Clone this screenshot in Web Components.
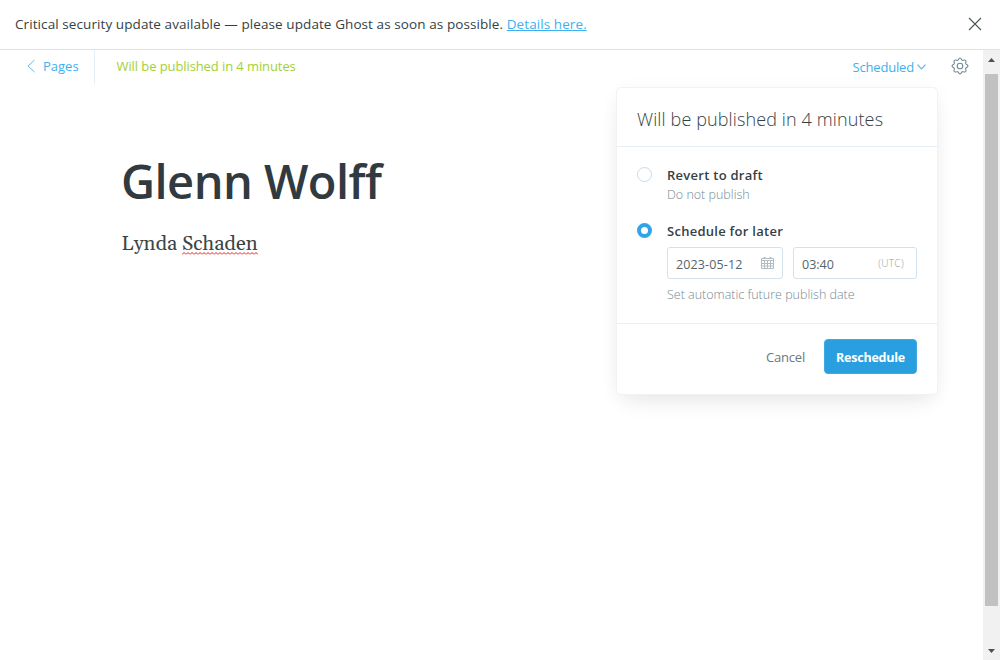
<!DOCTYPE html>
<html lang="en">
<head>
<meta charset="utf-8">
<title>Ghost editor</title>
<style>
html,body{margin:0;height:100%;overflow:hidden;background:#fff}
body{font-family:"Open Sans","Noto Sans",sans-serif;color:#343f44;font-size:13px}
</style>
</head>
<body>
<ghost-app></ghost-app>
<script>
function define(name, html) {
  const t = document.createElement('template');
  t.innerHTML = html;
  customElements.define(name, class extends HTMLElement {
    constructor() {
      super();
      this.attachShadow({mode: 'open'}).append(t.content.cloneNode(true));
    }
  });
}

define('ghost-alert', `
<style>
:host{display:flex;box-sizing:border-box;height:50px;flex:none;border-bottom:1px solid #dfe1e3;padding:0 18px 1px 15px;align-items:center;justify-content:space-between;font-size:13.500px;line-height:20px;color:#343f44}
p{margin:0;white-space:nowrap;letter-spacing:.085px}
svg{display:block}
</style>
<p><slot></slot></p>
<svg width="14" height="14" viewBox="0 0 14 14" fill="none" stroke="#4a5459" stroke-width="1.1"><path d="M1 1l12 12M13 1L1 13"/></svg>`);

define('editor-toolbar', `
<style>
:host{display:flex;height:33px;align-items:center;font-size:13px;white-space:nowrap}
.back{display:flex;align-items:center;box-sizing:border-box;width:95px;height:34px;margin-bottom:-1px;padding:0 0 2px 27px;border-right:1px solid #e5eff5;color:#3eb0ef}
.back svg{margin-right:8px}
.status{margin-left:21.500px;color:#a4d037;padding-bottom:2px;letter-spacing:-.09px}
.sch{margin-left:auto;color:#3eb0ef;display:flex;align-items:center;letter-spacing:-.17px}
.sch svg{margin-left:3px;margin-top:1px}
.gear{margin:0 14px 2px 25px}
</style>
<div class="back"><svg width="8" height="14" viewBox="0 0 8 14" fill="none" stroke="#5fbcea" stroke-width="1"><path d="M7.500 1L1 7l6.500 6"/></svg><span>Pages</span></div>
<span class="status">Will be published in 4 minutes</span>
<div class="sch"><span>Scheduled</span><svg width="9" height="6" viewBox="0 0 9 6" fill="none" stroke="#62b5df" stroke-width="1.2"><path d="M.5.6l4 4.200 4-4.200"/></svg></div>
<svg class="gear" width="18" height="18" viewBox="0 0 18 18" fill="none" stroke="#738a94" stroke-width="1.1" stroke-linejoin="round"><circle cx="9" cy="9" r="2.800"/><path d="M7.300 2.800Q9 -.8 10.700 2.800Q11.400 3.600 12.200 3.300Q15.900 2.100 14.700 5.800Q14.400 6.600 15.200 7.300Q18.800 9 15.200 10.700Q14.400 11.400 14.700 12.200Q15.900 15.900 12.200 14.700Q11.400 14.400 10.700 15.200Q9 18.800 7.300 15.200Q6.600 14.400 5.800 14.700Q2.100 15.900 3.300 12.200Q3.600 11.400 2.800 10.700Q-.8 9 2.800 7.300Q3.600 6.600 3.300 5.800Q2.100 2.100 5.800 3.300Q6.600 3.600 7.300 2.800z"/></svg>`);

define('post-editor', `
<style>
:host{display:block;padding:69px 0 0 121px}
h1{margin:0;font-size:47px;line-height:58px;font-weight:600;color:#303a40;white-space:nowrap;letter-spacing:-.55px}
p{margin:18px 0 0;font:20.150px/32px Gelasio,Georgia,"Liberation Serif",serif;color:#3a4549;white-space:nowrap;padding-left:.5px}
u{text-decoration:none;background:url("data:image/svg+xml,%3Csvg xmlns='http://www.w3.org/2000/svg' width='4' height='3'%3E%3Cpath d='M0 2.500L2 .5L4 2.500' fill='none' stroke='%23f01818'/%3E%3C/svg%3E") 0 calc(100% - 2px)/4px 3px repeat-x}
</style>
<h1>Glenn Wolff</h1>
<p>Lynda <u>Schaden</u></p>`);

define('radio-option', `
<style>
:host{display:grid;grid-template-columns:15px 1fr;column-gap:15px;line-height:20px}
i{box-sizing:border-box;width:15px;height:15px;margin-top:2px;border-radius:50%;border:1px solid #c5dceb}
:host([checked]) i{border:4px solid #2fa4e7}
b{font-size:13px;font-weight:600;color:#343f44;white-space:nowrap;letter-spacing:.27px}
</style>
<i></i><div><b><slot name="label"></slot></b><slot></slot></div>`);

define('text-field', `
<style>
:host{display:flex;box-sizing:border-box;height:32px;border:1px solid #d3e2ec;border-radius:3px;padding:3px 8px 0;align-items:center;justify-content:space-between;color:#56646b;font-size:12.500px;white-space:nowrap}
</style><slot></slot>`);

define('publish-menu', `
<style>
:host{display:block;box-sizing:border-box;background:#fff;border:1px solid #f1f2f3;border-radius:5px;box-shadow:0 12px 22px -8px rgba(39,44,49,.10),0 2px 18px rgba(39,44,49,.035)}
header{box-sizing:border-box;height:59px;border-bottom:1px solid #e5eff5;padding:3px 20px 0;line-height:57px;font-size:18px;font-weight:330;letter-spacing:.12px;color:#343f44;white-space:nowrap}
section{box-sizing:border-box;height:177px;border-bottom:1px solid #e5eff5;padding:18px 20px 0;display:flex;flex-direction:column;gap:16px}
.hint{font-size:12.500px;font-weight:320;color:#738a94;white-space:nowrap;line-height:20px}
.fields{display:grid;grid-template-columns:116px 124px;gap:10px;margin:6px 0}
.date{letter-spacing:.12px}
.fields svg{margin-bottom:4px}
.utc{font-size:10px;font-weight:320;color:#8b9da6;margin:0 4px 3px 0;letter-spacing:.35px}
footer{display:flex;justify-content:flex-end;align-items:center;gap:19px;padding:15px 20px 20px}
.cancel{color:#667a84;font-size:13px;letter-spacing:-.2px}
.btn{box-sizing:border-box;width:93px;height:35px;border-radius:4px;border:1px solid #3daae5;background:#2a9fe0;color:#fff;font-weight:700;line-height:35px;text-align:center;font-size:12.500px;letter-spacing:-.22px}
</style>
<header>Will be published in 4 minutes</header>
<section>
<radio-option><span slot="label">Revert to draft</span><div class="hint">Do not publish</div></radio-option>
<radio-option checked><span slot="label">Schedule for later</span>
<div class="fields"><text-field><span class="date">2023-05-12</span>
<svg width="13" height="14" viewBox="0 0 13 14" fill="none" stroke="#b2bdc3" stroke-width="1"><path d="M.5 2.500h12v10H.5zM.5 4.500h12M.5 7.500h12M.5 10h12M3.500 4v9M6.500 4v9M9.500 4v9"/><path d="M3.500 1v2M9.500 1v2" stroke-width="2"/></svg></text-field>
<text-field><span>03:40</span><span class="utc">(UTC)</span></text-field></div>
<div class="hint">Set automatic future publish date</div></radio-option>
</section>
<footer><span class="cancel">Cancel</span><div class="btn">Reschedule</div></footer>`);

define('page-scrollbar', `
<style>
:host{display:flex;flex-direction:column;align-items:center;box-sizing:border-box;width:17px;background:#f1f1f1;padding:7px 0 6px}
.thumb{width:13px;height:532px;background:#c1c1c1;margin-top:12px}
svg{display:block}
.down{margin-top:auto}
</style>
<svg width="7" height="5"><path d="M0 5L3.500 1 7 5z" fill="#505050"/></svg><div class="thumb"></div><svg class="down" width="7" height="5"><path d="M0 0h7L3.500 4z" fill="#505050"/></svg>`);

define('ghost-app', `
<style>
:host{display:flex;flex-direction:column;height:660px;width:1000px;overflow:hidden}
.row{display:flex;flex:1;min-height:0}
main{position:relative;flex:1}
publish-menu{position:absolute;top:37px;right:45px;width:322px;height:308px}
a{color:#3eb0ef;text-decoration:underline}
</style>
<ghost-alert>Critical security update available — please update Ghost as soon as possible. <a>Details here.</a></ghost-alert>
<div class="row"><main><editor-toolbar></editor-toolbar><post-editor></post-editor><publish-menu></publish-menu></main><page-scrollbar></page-scrollbar></div>`);
</script>
</body>
</html>
